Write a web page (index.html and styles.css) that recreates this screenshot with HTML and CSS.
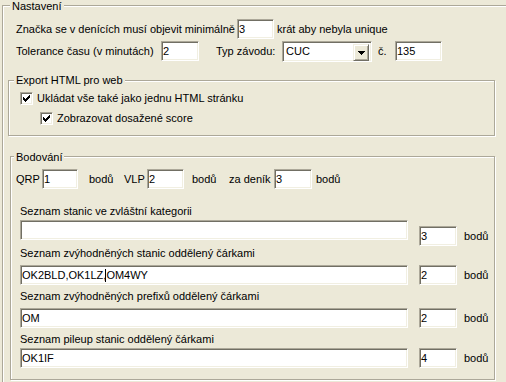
FILE: index.html
```html
<!DOCTYPE html>
<html lang="cs">
<head>
    <meta charset="UTF-8">
    <title>Nastavení</title>
    <link rel="stylesheet" href="styles.css">
</head>
<body>
    <div class="group main">
        <div class="legend">Nastavení</div>

        <div class="row r1">
            <span class="lbl-min">Značka se v denících musí objevit minimálně</span>
            <span class="edit w37">3</span>
            <span class="after-min">krát aby nebyla unique</span>
        </div>

        <div class="row r2">
            <span class="lbl-tol">Tolerance času (v minutách)</span>
            <span class="edit w38">2</span>
            <span class="lbl-typ">Typ závodu:</span>
            <span class="combo">
                <span class="combo-text">CUC</span>
                <span class="combo-btn">
                    <svg width="7" height="4" viewBox="0 0 7 4"><path d="M0 0h7v1h-1v1h-1v1h-1v1h-1v-1h-1v-1h-1v-1h-1z" fill="#000"/></svg>
                </span>
            </span>
            <span class="lbl-c">č.</span>
            <span class="edit w47">135</span>
        </div>

        <div class="group export">
            <div class="legend">Export HTML pro web</div>
            <div class="check c1">
                <span class="box"><svg width="7" height="7" viewBox="0 0 7 7"><path d="M6 0h1v1h-1z M5 1h2v1h-2z M0 2h1v1h-1z M4 2h3v1h-3z M0 3h2v1h-2z M3 3h3v1h-3z M0 4h5v1h-5z M1 5h3v1h-3z M2 6h1v1h-1z" fill="#000"/></svg></span>
                <span>Ukládat vše také jako jednu HTML stránku</span>
            </div>
            <div class="check c2">
                <span class="box"><svg width="7" height="7" viewBox="0 0 7 7"><path d="M6 0h1v1h-1z M5 1h2v1h-2z M0 2h1v1h-1z M4 2h3v1h-3z M0 3h2v1h-2z M3 3h3v1h-3z M0 4h5v1h-5z M1 5h3v1h-3z M2 6h1v1h-1z" fill="#000"/></svg></span>
                <span>Zobrazovat dosažené score</span>
            </div>
        </div>

        <div class="group score">
            <div class="legend">Bodování</div>

            <div class="row pts">
                <span class="lbl-qrp">QRP</span>
                <span class="edit w36">1</span>
                <span class="unit u1">bodů</span>
                <span class="lbl-vlp">VLP</span>
                <span class="edit w37">2</span>
                <span class="unit u2">bodů</span>
                <span class="lbl-den">za deník</span>
                <span class="edit w38">3</span>
                <span class="unit u3">bodů</span>
            </div>

            <div class="list la">
                <div class="list-lbl">Seznam stanic ve zvláštní kategorii</div>
                <div class="row list-row">
                    <span class="edit wide"></span>
                    <span class="edit w38 small">3</span>
                    <span class="unit u4">bodů</span>
                </div>
            </div>

            <div class="list lb">
                <div class="list-lbl">Seznam zvýhodněných stanic oddělený čárkami</div>
                <div class="row list-row">
                    <span class="edit wide">OK2BLD,OK1LZ,<span class="caret"></span>OM4WY</span>
                    <span class="edit w38 small">2</span>
                    <span class="unit u4">bodů</span>
                </div>
            </div>

            <div class="list lc">
                <div class="list-lbl">Seznam zvýhodněných prefixů oddělený čárkami</div>
                <div class="row list-row">
                    <span class="edit wide">OM</span>
                    <span class="edit w38 small">2</span>
                    <span class="unit u4">bodů</span>
                </div>
            </div>

            <div class="list ld">
                <div class="list-lbl">Seznam pileup stanic oddělený čárkami</div>
                <div class="row list-row">
                    <span class="edit wide">OK1IF</span>
                    <span class="edit w38 small">4</span>
                    <span class="unit u4">bodů</span>
                </div>
            </div>
        </div>
    </div>
</body>
</html>
```

FILE: styles.css
```css
* {
    margin: 0;
    padding: 0;
    box-sizing: border-box;
}
html, body {
    width: 506px;
    height: 382px;
    overflow: hidden;
}
body {
    background-color: #ECE9D8;
    color: #000000;
    font-family: "Liberation Sans", Arial, sans-serif;
    font-size: 11px;
    line-height: 13px;
    white-space: nowrap;
}

/* etched group box */
.group {
    border: 1px solid #ACA899;
    box-shadow: inset 1px 1px #FFFFFF, 1px 1px #FFFFFF;
}
.legend {
    width: max-content;
    padding: 0 2px;
    background-color: #ECE9D8;
}
/* outer box runs past the window edge: no right or bottom side */
.main {
    width: 504px;
    height: 377px;
    margin: 5px 0 0 2px;
    border-right: 0;
    border-bottom: 0;
    box-shadow: inset 1px 1px #FFFFFF;
}
.main > .legend {
    margin: -6px 0 0 7px;
}

.row {
    display: flex;
    align-items: baseline;
}
.r1 {
    margin: 6px 0 0 13px;
}
.r2 {
    margin: 2px 0 0 13px;
}
.lbl-min {
    width: 221px;
}
.after-min {
    margin-left: 3px;
}
.lbl-tol {
    width: 145px;
}
.lbl-typ {
    width: 66px;
    margin-left: 17px;
}
.lbl-c {
    width: 17px;
    margin-left: 6px;
}

/* sunken edit box */
.edit {
    display: block;
    height: 20px;
    padding: 3px 1px 0 1px;
    background-color: #FFFFFF;
    border: 1px solid;
    border-color: #ACA899 #FFFFFF #FFFFFF #ACA899;
    box-shadow: inset 1px 1px #716F64, inset -1px -1px #F1EFE2;
    overflow: hidden;
}
.w36 { width: 36px; }
.w37 { width: 37px; }
.w38 { width: 38px; }
.w47 { width: 47px; }

.combo {
    display: flex;
    align-items: baseline;
    width: 90px;
    height: 21px;
    padding: 3px 2px 0 3px;
    background-color: #FFFFFF;
    border: 1px solid;
    border-color: #ACA899 #FFFFFF #FFFFFF #ACA899;
    box-shadow: inset 1px 1px #716F64, inset -1px -1px #F1EFE2;
    position: relative;
}
.combo-text {
    flex: 1;
}
.combo-btn {
    position: absolute;
    right: 2px;
    top: 2px;
    width: 16px;
    height: 17px;
    display: flex;
    align-items: center;
    justify-content: center;
    background-color: #ECE9D8;
    border: 1px solid;
    border-color: #F1EFE2 #716F64 #716F64 #F1EFE2;
    box-shadow: inset 1px 1px #FFFFFF, inset -1px -1px #ACA899;
}
.combo-btn svg {
    display: block;
}

/* export */
.export {
    width: 487px;
    margin: 18px 0 0 5px;
    padding-bottom: 10px;
}
.export > .legend {
    margin: -7px 0 0 5px;
}
.check {
    display: flex;
    align-items: center;
}
.c1 {
    margin: 5px 0 0 11px;
}
.c2 {
    margin: 7px 0 0 31px;
}
.box {
    display: flex;
    align-items: center;
    justify-content: center;
    width: 13px;
    height: 13px;
    margin-right: 4px;
    background-color: #FFFFFF;
    border: 1px solid;
    border-color: #ACA899 #FFFFFF #FFFFFF #ACA899;
    box-shadow: inset 1px 1px #716F64, inset -1px -1px #F1EFE2;
}
.box svg {
    display: block;
}

/* scoring */
.score {
    width: 485px;
    margin: 20px 0 0 7px;
    padding-bottom: 11px;
}
.score > .legend {
    margin: -6px 0 0 3px;
}
.pts {
    margin: 5px 0 0 5px;
}
.lbl-qrp { width: 26px; }
.lbl-vlp { width: 23px; }
.lbl-den { width: 45px; }
.unit.u1 { width: 35px; margin-left: 11px; }
.unit.u2 { width: 37px; margin-left: 8px; }
.unit.u3 { margin-left: 4px; }
.unit.u4 { margin-left: 7px; }

.list {
    margin-left: 9px;
}
.la { margin-top: 16px; }
.lb { margin-top: 1px; }
.lc { margin-top: 5px; }
.ld { margin-top: 5px; }
.list-lbl {
    height: 13px;
}
.la .list-row { margin-top: 2px; }
.lb .list-row { margin-top: 5px; }
.lc .list-row { margin-top: 5px; }
.ld .list-row { margin-top: 2px; }
.wide {
    width: 388px;
}
.small {
    margin-left: 11px;
}
.caret {
    display: inline-block;
    width: 1px;
    height: 13px;
    margin-left: -1px;
    vertical-align: top;
    background-color: #000000;
}
```
